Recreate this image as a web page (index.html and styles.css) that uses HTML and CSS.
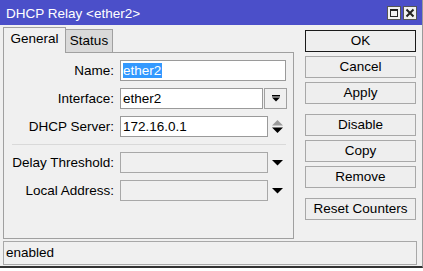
FILE: index.html
```html
<!DOCTYPE html>
<html lang="en">
<head>
    <meta charset="UTF-8">
    <title>DHCP Relay &lt;ether2&gt;</title>
    <link rel="stylesheet" href="styles.css">
</head>
<body>
    <div class="window">
        <div class="titlebar">
            <span class="title">DHCP Relay &lt;ether2&gt;</span>
            <div class="title-buttons">
                <span class="tbtn">
                    <svg width="12" height="12" viewBox="0 0 12 12"><rect x="2.5" y="2.5" width="7" height="7" fill="none" stroke="#222" stroke-width="1"/><rect x="2" y="2" width="8" height="2" fill="#222"/></svg>
                </span>
                <span class="tbtn">
                    <svg width="12" height="12" viewBox="0 0 12 12"><path d="M2.5 2.5 L9.5 9.5 M9.5 2.5 L2.5 9.5" stroke="#222" stroke-width="2"/></svg>
                </span>
            </div>
        </div>

        <div class="main">
            <div class="left">
                <div class="tabs">
                    <div class="tab active">General</div>
                    <div class="tab">Status</div>
                </div>
                <div class="panel">
                    <div class="row">
                        <label>Name:</label>
                        <div class="field name-field"><span class="selected">ether2</span></div>
                    </div>
                    <div class="row">
                        <label>Interface:</label>
                        <div class="field short">ether2</div>
                        <div class="drop-btn">
                            <svg width="8" height="7" viewBox="0 0 8 7"><rect x="0" y="0" width="8" height="1.5" fill="#000"/><path d="M0 2.5 H8 L4 6.5 Z" fill="#000"/></svg>
                        </div>
                    </div>
                    <div class="row">
                        <label>DHCP Server:</label>
                        <div class="field mid">172.16.0.1</div>
                        <div class="arrows">
                            <svg width="11" height="13" viewBox="0 0 11 13"><path d="M5.5 0 L11 5.5 H0 Z" fill="#9a9a9a"/><path d="M0 7.5 H11 L5.5 13 Z" fill="#000"/></svg>
                        </div>
                    </div>
                    <div class="separator"></div>
                    <div class="row">
                        <label>Delay Threshold:</label>
                        <div class="field mid disabled"></div>
                        <div class="arrows">
                            <svg width="11" height="6" viewBox="0 0 11 6"><path d="M0 0 H11 L5.5 5.5 Z" fill="#000"/></svg>
                        </div>
                    </div>
                    <div class="row">
                        <label>Local Address:</label>
                        <div class="field mid disabled"></div>
                        <div class="arrows">
                            <svg width="11" height="6" viewBox="0 0 11 6"><path d="M0 0 H11 L5.5 5.5 Z" fill="#000"/></svg>
                        </div>
                    </div>
                </div>
            </div>

            <div class="buttons">
                <div class="btn default">OK</div>
                <div class="btn">Cancel</div>
                <div class="btn group-end">Apply</div>
                <div class="btn">Disable</div>
                <div class="btn">Copy</div>
                <div class="btn group-end">Remove</div>
                <div class="btn">Reset Counters</div>
            </div>
        </div>

        <div class="statusbar">enabled</div>
    </div>
</body>
</html>
```

FILE: styles.css
```css
body {
    margin: 0;
    background-color: #fff;
    font-family: 'Liberation Sans', Arial, sans-serif;
    font-size: 13.5px;
    color: #000;
}

.window {
    width: 423px;
    height: 268px;
    box-sizing: border-box;
    background-color: #f0f0f0;
    border-right: 1px solid #9a9a9a;
    border-bottom: 2px solid #333;
    display: flex;
    flex-direction: column;
}

.titlebar {
    height: 25px;
    flex: none;
    background-color: #4b4fc9;
    color: #fff;
    display: flex;
    align-items: center;
    justify-content: space-between;
    padding: 0 5px 0 6px;
}

.title {
    padding-top: 1px;
}

.title-buttons {
    display: flex;
    gap: 2px;
}

.tbtn {
    width: 12px;
    height: 12px;
    background-color: #f0f0f0;
    border: 1px solid #555;
    display: flex;
}

.main {
    display: flex;
    padding-left: 3px;
    flex: none;
}

.left {
    width: 291px;
}

.tabs {
    display: flex;
    align-items: flex-end;
    margin-top: 2px;
    height: 25px;
}

.tab {
    box-sizing: border-box;
    border: 1px solid #a0a0a0;
    border-bottom: none;
    text-align: center;
}

.tab.active {
    width: 63px;
    height: 26px;
    line-height: 22px;
    background-color: #f0f0f0;
    margin-bottom: -1px;
    position: relative;
    z-index: 1;
}

.tab:not(.active) {
    width: 47px;
    height: 23px;
    line-height: 22px;
    background-color: #d9d9d9;
    border-left: none;
}

.panel {
    box-sizing: border-box;
    height: 187px;
    border: 1px solid #a0a0a0;
    padding-top: 7px;
}

.row {
    display: flex;
    align-items: center;
    height: 21px;
    margin-bottom: 7px;
}

.row label {
    width: 110px;
    margin-right: 6px;
    text-align: right;
}

.field {
    box-sizing: border-box;
    height: 21px;
    border: 1px solid #9a9a9a;
    background-color: #fff;
    padding-left: 2px;
    line-height: 19px;
    white-space: nowrap;
}

.name-field {
    width: 166px;
}

.selected {
    background-color: #3399ff;
    color: #fff;
    display: inline-block;
    line-height: 15px;
    padding-right: 1px;
}

.field.short {
    width: 143px;
}

.field.mid {
    width: 148px;
}

.field.disabled {
    background-color: #f0f0f0;
    border-color: #a8a8a8;
}

.drop-btn {
    box-sizing: border-box;
    width: 23px;
    height: 21px;
    margin-left: 1px;
    border: 1px solid #a0a0a0;
    background-color: #f0f0f0;
    display: flex;
    align-items: center;
    justify-content: center;
}

.arrows {
    width: 18px;
    display: flex;
    justify-content: center;
}

.separator {
    height: 1px;
    background-color: #d9d9d9;
    margin: 2px 7px 7px 8px;
}

.buttons {
    margin-left: 11px;
    width: 111px;
    padding-top: 5px;
}

.btn {
    box-sizing: border-box;
    height: 22px;
    line-height: 20px;
    border: 1px solid #a8a8a8;
    background-color: #eeeeee;
    text-align: center;
    margin-bottom: 4px;
}

.btn.default {
    border-color: #1a1a1a;
}

.btn.group-end {
    margin-bottom: 10px;
}

.statusbar {
    box-sizing: border-box;
    height: 24px;
    margin: 2px 5px 0 3px;
    border: 1px solid #a8a8a8;
    padding-left: 2px;
    line-height: 22px;
}
```
